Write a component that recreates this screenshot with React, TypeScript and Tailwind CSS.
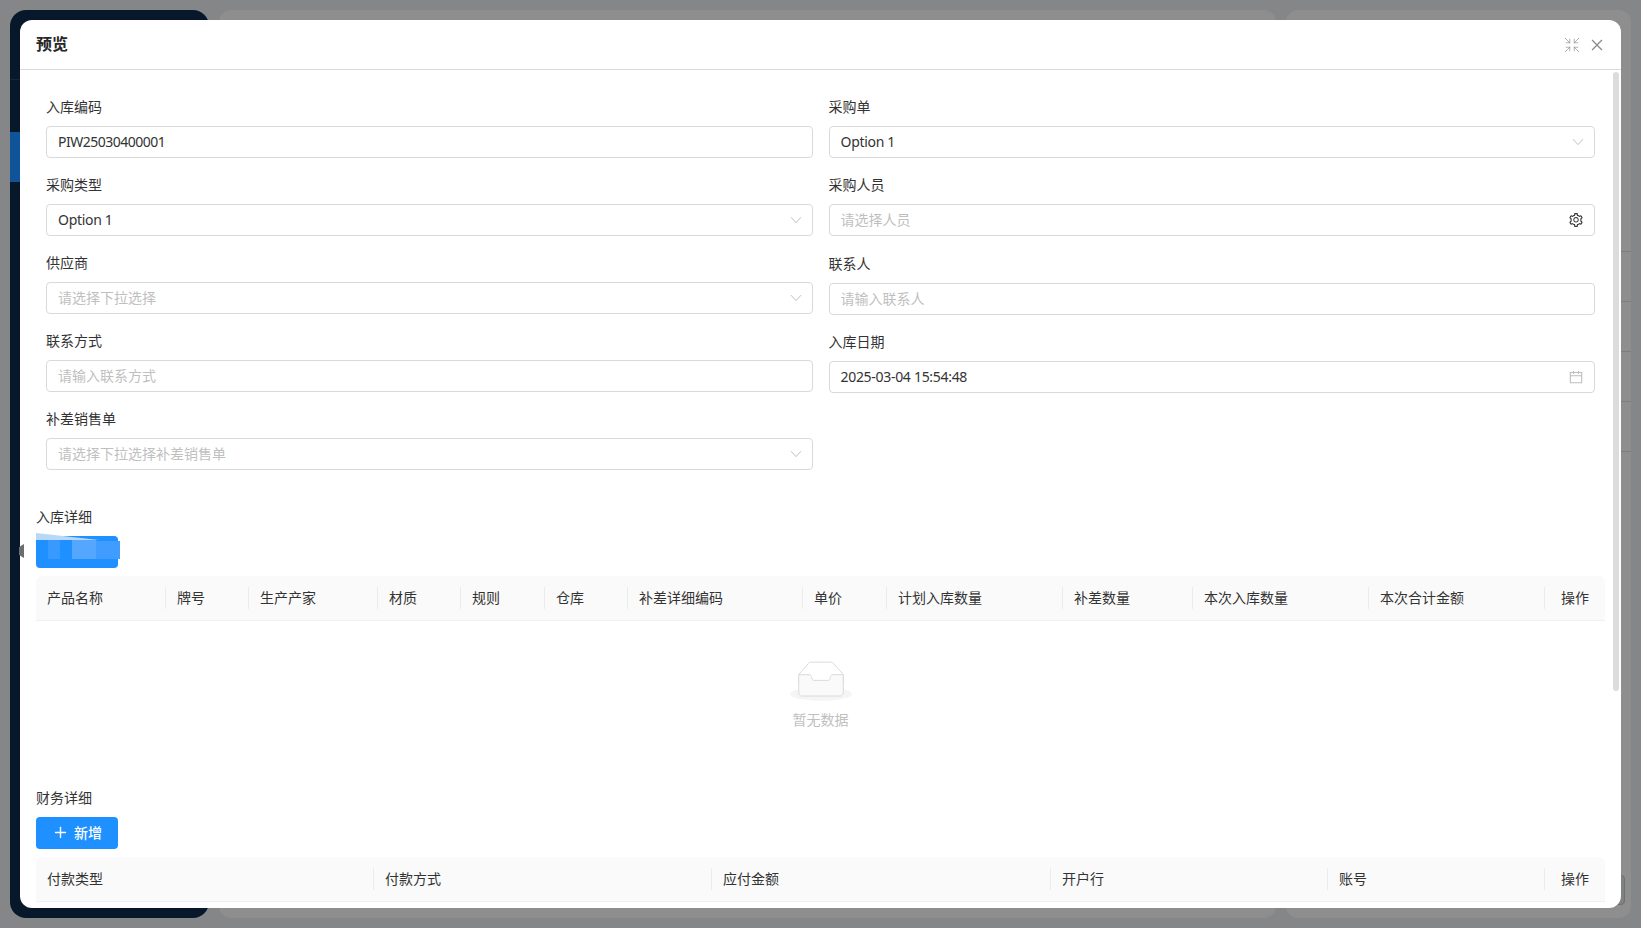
import { ReactNode } from "react"
import { Plus, Shrink } from "lucide-react"
import { AiOutlineCalendar, AiOutlineClose, AiOutlineSetting } from "react-icons/ai"

const inboundColumns = [
  { title: "产品名称", width: "w-[130px]" },
  { title: "牌号", width: "w-[83px]" },
  { title: "生产产家", width: "w-[129px]" },
  { title: "材质", width: "w-[83px]" },
  { title: "规则", width: "w-[84px]" },
  { title: "仓库", width: "w-[83px]" },
  { title: "补差详细编码", width: "w-[175px]" },
  { title: "单价", width: "w-[84px]" },
  { title: "计划入库数量", width: "w-[176px]" },
  { title: "补差数量", width: "w-[130px]" },
  { title: "本次入库数量", width: "w-[176px]" },
  { title: "本次合计金额", width: "w-[176px]" },
  { title: "操作", width: "w-[60px]" },
]

const financeColumns = [
  { title: "付款类型", width: "w-[338px]" },
  { title: "付款方式", width: "w-[338px]" },
  { title: "应付金额", width: "w-[339px]" },
  { title: "开户行", width: "w-[277px]" },
  { title: "账号", width: "w-[217px]" },
  { title: "操作", width: "w-[60px]" },
]

function Chevron() {
  return (
    <svg width="12" height="8" viewBox="0 0 12 8" fill="none" stroke="#bfbfbf" strokeWidth="1">
      <path d="M1 1.2 6 6.6 11 1.2" />
    </svg>
  )
}

function Field({
  label,
  value,
  placeholder,
  icon,
  tight = false,
}: {
  label: string
  value?: string
  placeholder?: string
  icon?: ReactNode
  tight?: boolean
}) {
  return (
    <div className="h-[78px]">
      <div className="h-[22px] leading-[22px] mb-2 text-[#333]">{label}</div>
      <div className="h-8 flex items-center justify-between rounded border border-[#d9d9d9] bg-white pl-[11px] pr-[10px]">
        {value ? (
          <span className={`pb-[2px] text-[#333] ${tight ? "tracking-[-0.5px]" : "tracking-[-0.3px]"}`}>{value}</span>
        ) : (
          <span className="pb-[2px] text-[#bfbfbf]">{placeholder}</span>
        )}
        {icon}
      </div>
    </div>
  )
}

function TableHead({ columns }: { columns: { title: string; width: string }[] }) {
  return (
    <div className="flex h-[45px] w-[1569px] items-center bg-[#fafafa] border-b border-[#f0f0f0] rounded-t-md text-[#333]">
      {columns.map((col, i) => (
        <div
          key={col.title + i}
          className={`${col.width} shrink-0 h-[22px] leading-[22px] ${
            i < columns.length - 1 ? "pl-[11px] border-r border-[#ececec]" : "pl-4"
          }`}
        >
          {col.title}
        </div>
      ))}
    </div>
  )
}

function AddButton({ children }: { children?: ReactNode }) {
  return (
    <button className="flex h-8 w-[82px] items-center justify-center gap-[5px] rounded bg-[#1e90ff] pb-[2px] text-white font-medium">
      {children}
    </button>
  )
}

function Background() {
  return (
    <div className="flex h-[928px] w-full gap-[10px] bg-[#858688] p-[10px] overflow-hidden">
      <aside className="w-[199px] shrink-0 rounded-2xl bg-[#07182a]">
        <div className="h-[70px] border-b border-[#14263a]" />
        <div className="mt-[52px] h-[50px] bg-[#0f5499]" />
      </aside>
      <div className="flex-1 rounded-xl bg-[#8e8e8f]" />
      <div className="w-[345px] shrink-0 rounded-xl bg-[#8e8e8f] pt-[192px]">
        {[0, 1, 2, 3, 4].map((n) => (
          <div key={n} className="h-[50px] border-b border-[#7c7d7f]" />
        ))}
        <div className="ml-auto mr-[6px] mt-[423px] h-[30px] w-20 rounded border border-[#6f7072] bg-[#808183]" />
      </div>
    </div>
  )
}

export default function App() {
  return (
    <div className="relative h-[928px] w-full overflow-hidden font-['Noto_Sans','Noto_Sans_CJK_SC',sans-serif] text-[14px]">
      <Background />

      <div className="absolute left-5 top-5 h-[888px] w-[1601px] overflow-hidden rounded-xl bg-white">
        <header className="flex h-[50px] items-center justify-between border-b border-[#dcdcdc] pl-4 pr-4">
          <h2 className="pb-[2px] text-base font-semibold text-[#262626]">预览</h2>
          <div className="flex items-center gap-2 text-[#8c8c8c]">
            <Shrink size={18} strokeWidth={1} className="text-[#999]" />
            <AiOutlineClose size={16} />
          </div>
        </header>

        <div className="px-4">
          <form className="grid grid-cols-2 gap-x-4 px-[10px] pt-[26px]">
            <div>
              <Field label="入库编码" value="PIW25030400001" tight />
              <Field label="采购类型" value="Option 1" icon={<Chevron />} />
              <Field label="供应商" placeholder="请选择下拉选择" icon={<Chevron />} />
              <Field label="联系方式" placeholder="请输入联系方式" />
              <Field label="补差销售单" placeholder="请选择下拉选择补差销售单" icon={<Chevron />} />
            </div>
            <div>
              <Field label="采购单" value="Option 1" icon={<Chevron />} />
              <Field
                label="采购人员"
                placeholder="请选择人员"
                icon={<AiOutlineSetting size={16} className="text-[#333]" />}
              />
              <div className="pt-px">
                <Field label="联系人" placeholder="请输入联系人" />
                <Field
                  label="入库日期"
                  value="2025-03-04 15:54:48"
                  icon={<AiOutlineCalendar size={16} className="text-[#bfbfbf]" />}
                />
              </div>
            </div>
          </form>

          <section className="mt-5">
            <div className="h-[22px] leading-[22px] mb-2 text-[#333]">入库详细</div>
            <AddButton />
            <div className="mt-2">
              <TableHead columns={inboundColumns} />
            </div>
            <div className="flex h-[166px] flex-col items-center pt-10">
              <svg width="62" height="40" viewBox="0 0 64 41">
                <g transform="translate(0 1)" fill="none" fillRule="evenodd">
                  <ellipse fill="#f5f5f5" cx="32" cy="33" rx="32" ry="7" />
                  <g fillRule="nonzero" stroke="#d9d9d9">
                    <path d="M55 12.76L44.854 1.258C44.367.474 43.656 0 42.907 0H21.093c-.749 0-1.46.474-1.947 1.257L9 12.761V22h46v-9.24z" />
                    <path
                      d="M41.613 15.931c0-1.605.994-2.93 2.227-2.931H55v18.137C55 33.26 53.68 35 52.05 35h-40.1C10.32 35 9 33.259 9 31.137V13h11.16c1.233 0 2.227 1.323 2.227 2.928v.022c0 1.605 1.005 2.901 2.237 2.901h14.752c1.232 0 2.237-1.308 2.237-2.913v-.007z"
                      fill="#fafafa"
                    />
                  </g>
                </g>
              </svg>
              <div className="mt-[8px] h-[22px] leading-[22px] text-[#bfbfbf]">暂无数据</div>
            </div>
          </section>

          <section>
            <div className="h-[22px] leading-[22px] mb-2 text-[#333]">财务详细</div>
            <AddButton>
              <Plus size={17} strokeWidth={2} />
              <span>新增</span>
            </AddButton>
            <div className="mt-2">
              <TableHead columns={financeColumns} />
            </div>
          </section>
        </div>

        {/* scrollbar */}
        <div className="absolute right-[2px] top-[52px] h-[619px] w-[6px] rounded-full bg-[#dcdcdc]" />
      </div>

      {/* mosaic over the first button, as in the picture */}
      <svg className="absolute left-[19px] top-[530px]" width="104" height="40" viewBox="0 0 104 40">
        <path d="M0 17 5 14V28L0 25z" fill="#6b6d70" />
        <path d="M17 3 80 10H17z" fill="#b7d8f8" />
        <path d="M29 10h12v19H29z" fill="#3899ff" />
        <path d="M53 10h24v19H53z" fill="#55a6ff" />
        <path d="M77 11h24v18H77z" fill="#409cff" />
      </svg>
    </div>
  )
}
